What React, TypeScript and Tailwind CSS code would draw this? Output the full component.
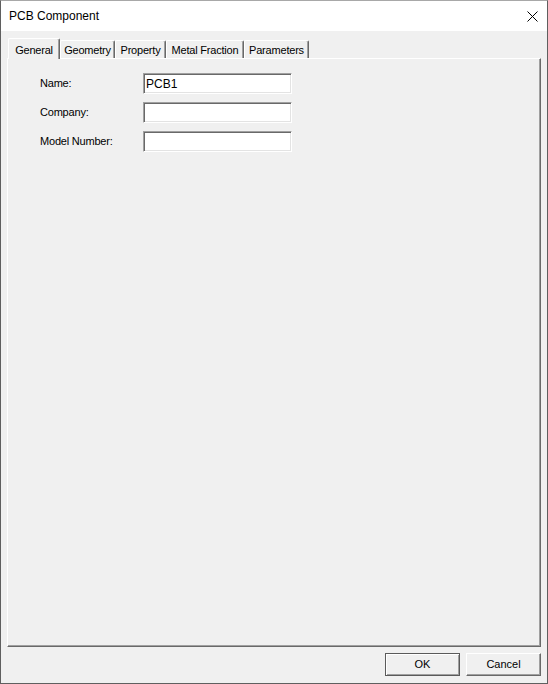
import React from "react";

const font = { fontFamily: '"Liberation Sans", Arial, sans-serif' };

const tabs = [
  { label: "General", w: "w-[52px]", sel: true },
  { label: "Geometry", w: "w-[55px]", sel: false },
  { label: "Property", w: "w-[51px]", sel: false },
  { label: "Metal Fraction", w: "w-[78px]", sel: false },
  { label: "Parameters", w: "w-[65px]", sel: false },
];

function Field({ label, value }: { label: string; value?: string }) {
  return (
    <div className="flex items-center h-[21px]">
      <div className="w-[103px] text-[11px] tracking-[-0.2px] text-black">{label}</div>
      <div className="w-[149px] h-[21px] bg-white border border-t-[#a0a0a0] border-l-[#a0a0a0] border-b-white border-r-white shadow-[inset_1px_1px_0_#696969,inset_-1px_-1px_0_#e3e3e3] flex items-center pl-[2px] text-[12px] text-black">
        {value}
      </div>
    </div>
  );
}

export default function App() {
  return (
    <div
      className="w-[548px] h-[684px] flex flex-col border border-[#5f5f5f] border-t-[#a8a8a8] bg-[#f0f0f0] select-none"
      style={font}
    >
      <div className="h-[30px] bg-white flex items-center justify-between shrink-0">
        <span className="pl-[8px] text-[12px] text-black">PCB Component</span>
        <svg width="11" height="11" viewBox="0 0 11 11" className="mr-[9px]">
          <path d="M0.5 0.5 L10.5 10.5 M10.5 0.5 L0.5 10.5" stroke="#000" strokeWidth="1" />
        </svg>
      </div>
      <div className="flex-1 flex flex-col px-[6px] pt-[7px] pb-[7px]">
        <div className="h-[20px] flex items-end shrink-0">
          {tabs.map((t) =>
            t.sel ? (
              <div
                key={t.label}
                className={`relative z-10 ml-[1px] ${t.w} h-[21px] -mb-px bg-[#f0f0f0] border-t border-l border-r border-t-white border-l-white border-r-[#696969] shadow-[inset_-1px_0_0_#a0a0a0] rounded-t-[2px] flex items-start justify-center pt-[3px] text-[11px] tracking-[-0.2px] text-black`}
              >
                {t.label}
              </div>
            ) : (
              <div
                key={t.label}
                className={`${t.w} h-[18px] bg-[#f0f0f0] border-t border-l border-r border-t-white border-l-white border-r-[#696969] shadow-[inset_-1px_0_0_#a0a0a0] rounded-t-[2px] flex items-center justify-center pt-[1px] text-[11px] tracking-[-0.2px] text-black`}
              >
                {t.label}
              </div>
            )
          )}
        </div>
        <div className="flex-1 border border-t-white border-l-white border-b-[#696969] border-r-[#696969] shadow-[inset_-1px_-1px_0_#a0a0a0] pt-[14px] pl-[32px] flex flex-col gap-[8px]">
          <Field label="Name:" value="PCB1" />
          <Field label="Company:" />
          <Field label="Model Number:" />
        </div>
        <div className="flex justify-end gap-[6px] mt-[6px] shrink-0">
          <button className="w-[75px] h-[23px] bg-[#f0f0f0] border border-[#5a5a5a] shadow-[inset_1px_1px_0_#ffffff,inset_-1px_-1px_0_#a0a0a0] text-[11px] text-black flex items-center justify-center">
            OK
          </button>
          <button className="w-[75px] h-[23px] bg-[#f0f0f0] border border-t-white border-l-white border-b-[#696969] border-r-[#696969] shadow-[inset_-1px_-1px_0_#a0a0a0] text-[11px] text-black flex items-center justify-center">
            Cancel
          </button>
        </div>
      </div>
    </div>
  );
}
